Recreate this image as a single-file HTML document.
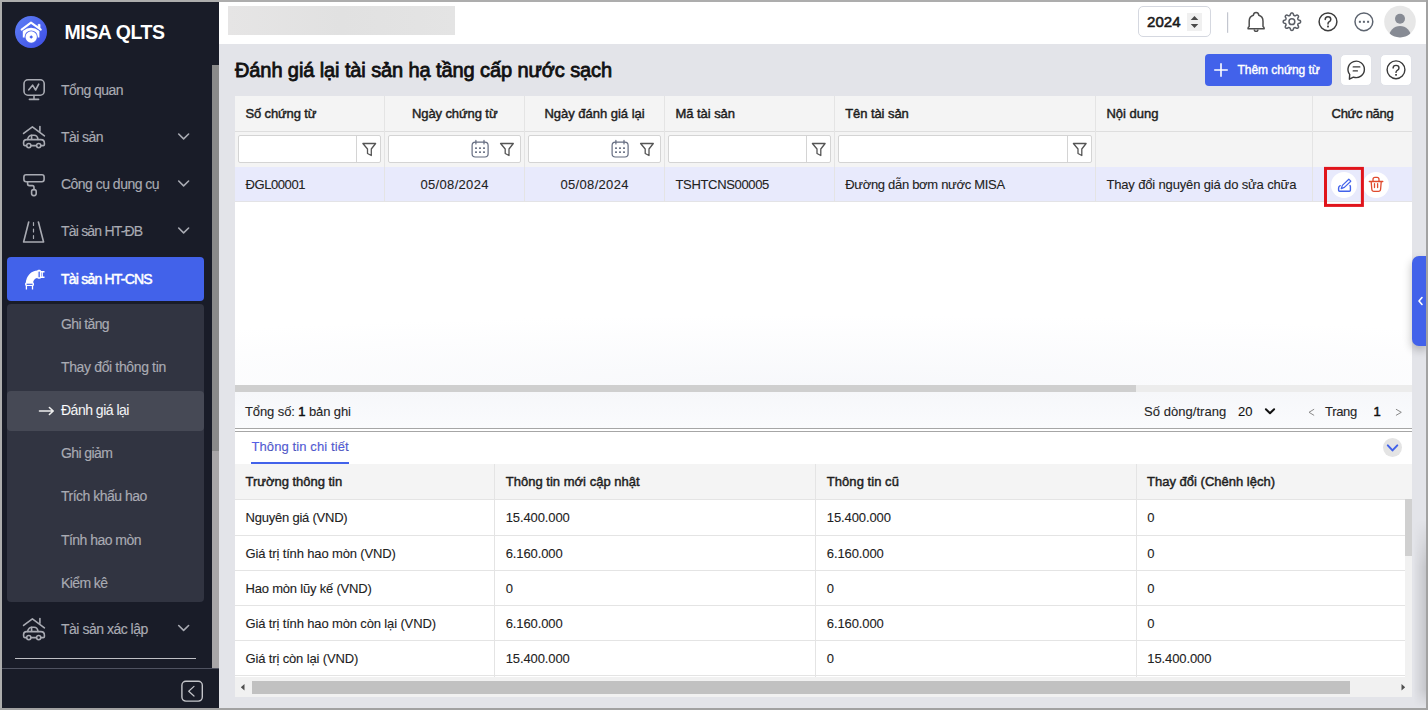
<!DOCTYPE html>
<html><head><meta charset="utf-8">
<style>
*{box-sizing:border-box;margin:0;padding:0}
html,body{width:1428px;height:710px;overflow:hidden;background:#e3e4e9;font-family:"Liberation Sans",sans-serif;position:relative}
.a{position:absolute;white-space:nowrap}
.mi{position:absolute;left:61px;font-size:14px;line-height:20px;color:#a9abb3;-webkit-text-stroke:0.15px #a9abb3;letter-spacing:-0.35px;white-space:nowrap}
.ico{position:absolute;left:22px;width:24px;height:24px}
.chev{position:absolute;left:176px;width:14px;height:14px}
.th{position:absolute;font-size:13px;line-height:20px;font-weight:normal;color:#1e1e1e;-webkit-text-stroke:0.45px #1e1e1e;letter-spacing:0;white-space:nowrap}
.td{position:absolute;font-size:13px;line-height:20px;color:#222;-webkit-text-stroke:0.1px #222;letter-spacing:-0.2px;white-space:nowrap}
.vl{position:absolute;width:1px;background:#e4e4e4}
.hl{position:absolute;height:1px;background:#e4e4e4}
.inp{position:absolute;top:135px;height:28px;background:#fff;border:1px solid #d4d4d4;border-radius:2px}
</style></head><body>
<!-- sidebar -->
<div class="a" style="left:2px;top:2px;width:217px;height:706px;background:#191c28"></div>
<!-- logo -->
<svg class="a" style="left:14px;top:14px" width="34" height="34" viewBox="14 14 34 34">
 <defs><linearGradient id="lg" x1="0" y1="0" x2="1" y2="1"><stop offset="0" stop-color="#5f80f6"/><stop offset="1" stop-color="#3d4ce4"/></linearGradient></defs>
 <circle cx="31" cy="32" r="16" fill="url(#lg)"/>
 <path d="M21.6 29.6 L31 22.6 L40.8 29.6" stroke="#fff" stroke-width="2" fill="none" stroke-linecap="round" stroke-linejoin="round"/>
 <path d="M38.2 27.6 V24.4 H40 V29" fill="#fff" stroke="#fff" stroke-width="0.8"/>
 <path d="M22.8 31 Q31 24.5 39.4 31 V37.6 H22.8Z" fill="#fff"/>
 <circle cx="31.2" cy="37" r="6.6" fill="#4f66ee"/>
 <circle cx="31.2" cy="37" r="5.7" fill="#fff"/>
 <rect x="29.9" y="35.7" width="2.6" height="2.6" transform="rotate(45 31.2 37)" fill="#4a62ee"/>
</svg>
<div class="a" style="left:64.5px;top:22px;font-size:19.5px;line-height:20px;font-weight:bold;color:#fff;letter-spacing:-0.45px">MISA QLTS</div>

<!-- sidebar scrollbar -->
<div class="a" style="left:212px;top:65px;width:7px;height:603px;background:#a8a6a8"></div>
<div class="a" style="left:212px;top:65px;width:7px;height:386px;background:#8a8a8a"></div>

<!-- icons -->
<svg class="a" style="left:0;top:60px" width="219" height="600" viewBox="0 60 219 600" fill="none" stroke="#a9abb3" stroke-width="1.6" stroke-linecap="round" stroke-linejoin="round">
 <!-- monitor -->
 <rect x="24" y="79.8" width="20.2" height="15.4" rx="4"/>
 <path d="M28.8 89.8 L32.6 85.2 L35.6 90 L38.7 84.2"/>
 <path d="M34 95.5 V99.4 M29.4 99.4 H38.6"/>
 <!-- house car -->
 <path d="M23.6 133.4 L32.4 126.8 L44.4 135.8"/>
 <path d="M39.9 126.5 V131.3"/>
 <path d="M27.6 139.4 Q28.5 135.2 32 135.2 H34 Q37.5 135.2 38 139.4"/>
 <path d="M31.6 135.4 V139.2"/>
 <path d="M26.3 145.6 H24.8 Q23.6 145.6 23.6 144 V142.4 Q23.6 139.6 26.6 139.6 H40.8 Q44.4 139.6 44.4 143.2 V144.4 Q44.4 145.6 43.2 145.6 H41.2 M31.3 145.6 H36.2"/>
 <circle cx="28.8" cy="145.6" r="2.1"/>
 <circle cx="38.7" cy="145.6" r="2.1"/>
 <!-- roller -->
 <rect x="23.9" y="174.8" width="20.2" height="7" rx="2.2"/>
 <path d="M27.6 182 V184 Q27.6 185.6 29.4 185.6 H32.4 Q34 185.6 34 187.4 V189.6"/>
 <rect x="31.6" y="189.6" width="4.6" height="6" rx="2"/>
 <!-- road -->
 <path d="M28.7 222 L23.6 242 H43.6 L38.4 222"/>
 <path d="M33.5 222.5 V225.5 M33.5 229 V232 M33.5 235.5 V238.5" stroke-width="1.2"/>
 <!-- chevrons -->
 <path d="M178.7 134 L183.6 138.9 L188.6 134"/>
 <path d="M178.7 181 L183.6 185.9 L188.6 181"/>
 <path d="M178.7 228 L183.6 232.9 L188.6 228"/>
 <path d="M178.7 625.5 L183.6 630.4 L188.6 625.5"/>
 <path d="M178.7 281 L183.6 275.9 L188.6 281" stroke="#fff" stroke-width="1.9"/>
 <!-- house car 2 -->
 <path d="M23.6 625.4 L32.4 618.8 L44.4 627.8"/>
 <path d="M39.9 618.5 V623.3"/>
 <path d="M27.6 631.4 Q28.5 627.2 32 627.2 H34 Q37.5 627.2 38 631.4"/>
 <path d="M31.6 627.4 V631.2"/>
 <path d="M26.3 637.6 H24.8 Q23.6 637.6 23.6 636 V634.4 Q23.6 631.6 26.6 631.6 H40.8 Q44.4 631.6 44.4 635.2 V636.4 Q44.4 637.6 43.2 637.6 H41.2 M31.3 637.6 H36.2"/>
 <circle cx="28.8" cy="637.6" r="2.1"/>
 <circle cx="38.7" cy="637.6" r="2.1"/>
</svg>

<!-- menu items -->
<div class="mi" style="top:80px;letter-spacing:-0.54px">Tổng quan</div>
<div class="mi" style="top:127px;letter-spacing:-0.57px">Tài sản</div>
<div class="mi" style="top:174px;letter-spacing:-0.52px">Công cụ dụng cụ</div>
<div class="mi" style="top:221px;letter-spacing:-0.8px">Tài sản HT-ĐB</div>
<div class="a" style="left:7px;top:257px;width:197px;height:44px;background:#4262ea;border-radius:4px"></div>
<svg class="a" style="left:18px;top:263px" width="32" height="32" viewBox="18 263 32 32">
 <path d="M25.9 283 A11.9 12.4 0 0 1 37.8 270.6 V278 A4.7 4.9 0 0 0 33.1 283 Z" fill="#fff"/>
 <rect x="37.2" y="269.8" width="3.8" height="9" rx="1.4" fill="#fff"/>
 <rect x="38.5" y="271.5" width="1.3" height="5.7" rx="0.5" fill="#4262ea"/>
 <path d="M40.8 271.7 H44.5 M42.2 271.7 V277.3 M40.8 277.3 H44.5" stroke="#fff" stroke-width="1.4" fill="none"/>
 <rect x="25.1" y="282.5" width="8.9" height="3.6" rx="1.3" fill="#fff"/>
 <rect x="26.6" y="283.7" width="5.9" height="1.2" fill="#4262ea"/>
 <path d="M26.4 286 V289.4 M32.5 286 V289.4" stroke="#fff" stroke-width="1.3"/>
</svg>
<div class="mi" style="top:268.5px;color:#fff;-webkit-text-stroke:0.5px #fff;letter-spacing:-0.79px">Tài sản HT-CNS</div>
<div class="a" style="left:7px;top:304px;width:197px;height:298px;background:#313441;border-radius:4px"></div>
<div class="a" style="left:7px;top:391px;width:197px;height:40px;background:#464955;border-radius:4px"></div>
<svg class="a" style="left:34px;top:400px" width="30" height="20" viewBox="34 400 30 20" fill="none" stroke="#eeeeee" stroke-width="1.6" stroke-linecap="round" stroke-linejoin="round">
 <path d="M39.5 411 H53 M49.4 407.5 L53.2 411 L49.4 414.5"/>
</svg>
<div class="mi" style="top:314px;letter-spacing:-0.62px">Ghi tăng</div>
<div class="mi" style="top:357px;letter-spacing:-0.36px">Thay đổi thông tin</div>
<div class="mi" style="top:400px;color:#fff;letter-spacing:-0.5px">Đánh giá lại</div>
<div class="mi" style="top:443px;letter-spacing:-0.6px">Ghi giảm</div>
<div class="mi" style="top:486px;letter-spacing:-0.51px">Trích khấu hao</div>
<div class="mi" style="top:530px;letter-spacing:-0.54px">Tính hao mòn</div>
<div class="mi" style="top:573px;letter-spacing:-0.61px">Kiểm kê</div>
<div class="mi" style="top:619px;letter-spacing:-0.49px">Tài sản xác lập</div>
<div class="a" style="left:15px;top:658px;width:181px;height:1px;background:#bfc0c5"></div>
<div class="a" style="left:2px;top:668px;width:217px;height:1px;background:#4f5260"></div>
<svg class="a" style="left:176px;top:674px" width="32" height="32" viewBox="176 674 32 32" fill="none" stroke="#c4c5ca" stroke-linecap="round" stroke-linejoin="round">
 <rect x="181.9" y="681.3" width="20.4" height="19.8" rx="4" stroke-width="1.4"/>
 <path d="M194 686.4 L188.7 691.2 L194 696" stroke-width="1.2"/>
</svg>

<!-- header -->
<div class="a" style="left:219px;top:2px;width:1207px;height:42px;background:#fff"></div>
<div class="a" style="left:228px;top:6px;width:227px;height:29px;background:linear-gradient(90deg,#e6e5e5,#e1e1e1 50%,#e4e4e4)"></div>
<div class="a" style="left:1138px;top:6px;width:73px;height:31px;border:1px solid #d5d8e0;border-radius:5px;background:#fff"></div>
<div class="a" style="left:1147px;top:12px;font-size:15px;line-height:20px;font-weight:normal;color:#1a1a1a;-webkit-text-stroke:0.55px #1a1a1a;letter-spacing:0.05px">2024</div>
<div class="a" style="left:1187px;top:13px;width:15px;height:18px;background:#f0f0f0"></div>
<svg class="a" style="left:1180px;top:2px" width="240" height="42" viewBox="1180 2 240 42">
 <path d="M1194.5 16 L1198.3 20 H1190.7 Z M1190.7 24 H1198.3 L1194.5 28 Z" fill="#4a4a4a"/>
 <rect x="1227" y="12.3" width="1.2" height="20.5" fill="#c3c6cf"/>
 <!-- bell -->
 <path d="M1248 28.7 Q1248 27.4 1249.2 26.4 V21.2 Q1249.2 16.4 1253.4 15.2 Q1253.8 12.6 1256.1 12.6 Q1258.4 12.6 1258.8 15.2 Q1263 16.4 1263 21.2 V26.4 Q1264.2 27.4 1264.2 28.7 Z" fill="none" stroke="#4d4d4d" stroke-width="1.5" stroke-linejoin="round"/>
 <path d="M1254.3 29.4 Q1254.3 31.3 1256.1 31.3 Q1257.9 31.3 1257.9 29.4" fill="none" stroke="#4d4d4d" stroke-width="1.4"/>
 <!-- gear -->
 <g transform="translate(1291.9 21.7)" fill="none" stroke="#5a5e66" stroke-width="1.5" stroke-linejoin="round">
  <path d="M0.00 -8.70 L0.34 -8.68 L0.68 -8.60 L1.00 -8.42 L1.27 -8.05 L1.48 -7.45 L1.65 -6.86 L1.82 -6.47 L2.03 -6.25 L2.25 -6.11 L2.49 -6.01 L2.73 -5.92 L2.98 -5.86 L3.28 -5.87 L3.69 -6.01 L4.22 -6.32 L4.79 -6.59 L5.25 -6.66 L5.60 -6.56 L5.90 -6.38 L6.15 -6.15 L6.38 -5.90 L6.56 -5.60 L6.66 -5.25 L6.59 -4.79 L6.32 -4.22 L6.01 -3.69 L5.87 -3.28 L5.86 -2.98 L5.92 -2.73 L6.01 -2.49 L6.11 -2.25 L6.25 -2.03 L6.47 -1.82 L6.86 -1.65 L7.45 -1.48 L8.05 -1.27 L8.42 -1.00 L8.60 -0.68 L8.68 -0.34 L8.70 0.00 L8.68 0.34 L8.60 0.68 L8.42 1.00 L8.05 1.27 L7.45 1.48 L6.86 1.65 L6.47 1.82 L6.25 2.03 L6.11 2.25 L6.01 2.49 L5.92 2.73 L5.86 2.98 L5.87 3.28 L6.01 3.69 L6.32 4.22 L6.59 4.79 L6.66 5.25 L6.56 5.60 L6.38 5.90 L6.15 6.15 L5.90 6.38 L5.60 6.56 L5.25 6.66 L4.79 6.59 L4.22 6.32 L3.69 6.01 L3.28 5.87 L2.98 5.86 L2.73 5.92 L2.49 6.01 L2.25 6.11 L2.03 6.25 L1.82 6.47 L1.65 6.86 L1.48 7.45 L1.27 8.05 L1.00 8.42 L0.68 8.60 L0.34 8.68 L0.00 8.70 L-0.34 8.68 L-0.68 8.60 L-1.00 8.42 L-1.27 8.05 L-1.48 7.45 L-1.65 6.86 L-1.82 6.47 L-2.03 6.25 L-2.25 6.11 L-2.49 6.01 L-2.73 5.92 L-2.98 5.86 L-3.28 5.87 L-3.69 6.01 L-4.22 6.32 L-4.79 6.59 L-5.25 6.66 L-5.60 6.56 L-5.90 6.38 L-6.15 6.15 L-6.38 5.90 L-6.56 5.60 L-6.66 5.25 L-6.59 4.79 L-6.32 4.22 L-6.01 3.69 L-5.87 3.28 L-5.86 2.98 L-5.92 2.73 L-6.01 2.49 L-6.11 2.25 L-6.25 2.03 L-6.47 1.82 L-6.86 1.65 L-7.45 1.48 L-8.05 1.27 L-8.42 1.00 L-8.60 0.68 L-8.68 0.34 L-8.70 0.00 L-8.68 -0.34 L-8.60 -0.68 L-8.42 -1.00 L-8.05 -1.27 L-7.45 -1.48 L-6.86 -1.65 L-6.47 -1.82 L-6.25 -2.03 L-6.11 -2.25 L-6.01 -2.49 L-5.92 -2.73 L-5.86 -2.98 L-5.87 -3.28 L-6.01 -3.69 L-6.32 -4.22 L-6.59 -4.79 L-6.66 -5.25 L-6.56 -5.60 L-6.38 -5.90 L-6.15 -6.15 L-5.90 -6.38 L-5.60 -6.56 L-5.25 -6.66 L-4.79 -6.59 L-4.22 -6.32 L-3.69 -6.01 L-3.28 -5.87 L-2.98 -5.86 L-2.73 -5.92 L-2.49 -6.01 L-2.25 -6.11 L-2.03 -6.25 L-1.82 -6.47 L-1.65 -6.86 L-1.48 -7.45 L-1.27 -8.05 L-1.00 -8.42 L-0.68 -8.60 L-0.34 -8.68 Z"/>
  <circle r="2.9"/>
 </g>
 <!-- help -->
 <circle cx="1328" cy="21.8" r="8.9" fill="none" stroke="#3d3d3d" stroke-width="1.5"/>
 <path d="M1325.2 19.6 Q1325.2 16.8 1328 16.8 Q1330.8 16.8 1330.8 19.4 Q1330.8 21 1329 21.9 Q1328 22.5 1328 24" fill="none" stroke="#3d3d3d" stroke-width="1.5" stroke-linecap="round"/>
 <rect x="1327.1" y="25.6" width="1.8" height="1.8" fill="#3d3d3d"/>
 <!-- more -->
 <circle cx="1363.9" cy="21.8" r="8.9" fill="none" stroke="#5e6570" stroke-width="1.5"/>
 <rect x="1358.9" y="20.8" width="2" height="2" fill="#5e6570"/>
 <rect x="1362.9" y="20.8" width="2" height="2" fill="#5e6570"/>
 <rect x="1367.1" y="20.8" width="2" height="2" fill="#5e6570"/>
 <!-- avatar -->
 <defs><clipPath id="avc"><circle cx="1400" cy="21.6" r="15.8"/></clipPath></defs>
 <circle cx="1400" cy="21.6" r="15.8" fill="#e7e7e7"/>
 <circle cx="1400" cy="18.8" r="5" fill="#878b94"/>
 <ellipse cx="1400" cy="37" rx="11" ry="11" fill="#878b94" clip-path="url(#avc)"/>
</svg>

<!-- title -->
<div class="a" style="left:235px;top:60px;font-size:20px;line-height:20px;font-weight:normal;color:#111;-webkit-text-stroke:0.8px #111;letter-spacing:-0.1px">Đánh giá lại tài sản hạ tầng cấp nước sạch</div>

<!-- buttons -->
<div class="a" style="left:1205px;top:54px;width:127px;height:32px;background:#4262ea;border-radius:4px"></div>
<svg class="a" style="left:1210px;top:58px" width="24" height="24" viewBox="1210 58 24 24"><path d="M1221 63.2 V76.8 M1214.2 70 H1227.8" stroke="#fff" stroke-width="1.6"/></svg>
<div class="a" style="left:1237.6px;top:60px;font-size:12px;line-height:20px;font-weight:normal;color:#fff;-webkit-text-stroke:0.4px #fff;letter-spacing:-0.05px">Thêm chứng từ</div>
<div class="a" style="left:1340px;top:54px;width:32px;height:32px;background:#fff;border:1px solid #e0e2e8;border-radius:5px"></div>
<div class="a" style="left:1380px;top:54px;width:32px;height:32px;background:#fff;border:1px solid #e0e2e8;border-radius:5px"></div>
<svg class="a" style="left:1340px;top:54px" width="72" height="32" viewBox="1340 54 72 32" fill="none" stroke="#3a3a3a" stroke-width="1.4" stroke-linecap="round" stroke-linejoin="round">
 <path d="M1349.7 74.4 A8.2 8.2 0 1 1 1353.4 77.1 L1349.4 79.2 Z"/>
 <path d="M1353.2 66.9 H1359.8 M1353.2 70.9 H1357.4" stroke-width="1.3"/>
 <circle cx="1396" cy="69.8" r="8.9"/>
 <path d="M1393.1 68.1 Q1393.1 65.4 1396 65.4 Q1399 65.4 1399 67.9 Q1399 69.4 1397.3 70.3 Q1396 71 1396 72.4"/>
 <rect x="1395.2" y="74" width="1.7" height="1.7" fill="#3a3a3a" stroke="none"/>
</svg>

<!-- table -->
<div class="a" style="left:235px;top:96px;width:1177px;height:71px;background:#f4f4f4"></div>
<div class="a" style="left:235px;top:167px;width:1177px;height:34px;background:#e8eafc"></div>
<div class="a" style="left:235px;top:201px;width:1177px;height:184px;background:radial-gradient(ellipse 1000px 70px at 50% 100%,#f7f8fb,#ffffff 100%)"></div>
<div class="hl" style="left:235px;top:201px;width:1177px;background:#e3e3e6"></div>
<div class="hl" style="left:235px;top:131px;width:1177px;background:#dedede"></div>
<div class="vl" style="left:384px;top:96px;height:106px"></div>
<div class="vl" style="left:524px;top:96px;height:106px"></div>
<div class="vl" style="left:664px;top:96px;height:106px"></div>
<div class="vl" style="left:834px;top:96px;height:106px"></div>
<div class="vl" style="left:1095px;top:96px;height:106px"></div>
<div class="vl" style="left:1312px;top:96px;height:106px"></div>

<div class="th" style="left:245.5px;top:104px;letter-spacing:-0.15px">Số chứng từ</div>
<div class="th" style="left:412px;top:104px;letter-spacing:-0.1px">Ngày chứng từ</div>
<div class="th" style="left:544.5px;top:104px;letter-spacing:-0.02px">Ngày đánh giá lại</div>
<div class="th" style="left:675.5px;top:104px;letter-spacing:-0.05px">Mã tài sản</div>
<div class="th" style="left:845.2px;top:104px;letter-spacing:-0.07px">Tên tài sản</div>
<div class="th" style="left:1106.4px;top:104px;letter-spacing:0px">Nội dung</div>
<div class="th" style="left:1331.5px;top:104px;letter-spacing:-0.26px">Chức năng</div>

<!-- filter inputs -->
<div class="inp" style="left:238px;width:143px"></div>
<div class="vl" style="left:356px;top:136px;height:26px;background:#d4d4d4"></div>
<div class="inp" style="left:388px;width:133px"></div>
<div class="inp" style="left:528px;width:133px"></div>
<div class="inp" style="left:668px;width:163px"></div>
<div class="vl" style="left:806px;top:136px;height:26px;background:#d4d4d4"></div>
<div class="inp" style="left:838px;width:254px"></div>
<div class="vl" style="left:1067px;top:136px;height:26px;background:#d4d4d4"></div>

<svg class="a" style="left:235px;top:132px" width="1177" height="34" viewBox="235 132 1177 34" fill="none" stroke-linejoin="round" stroke-linecap="round">
 <g stroke="#555" stroke-width="1.3">
  <path d="M362.9 143.5 H375.6 L371.3 149 V155.5 L367.5 153.5 V149 Z"/>
  <path d="M500.6 143.5 H513.3 L509 149 V155.5 L505.2 153.5 V149 Z"/>
  <path d="M640.6 143.5 H653.3 L649 149 V155.5 L645.2 153.5 V149 Z"/>
  <path d="M812.4 143.5 H825.1 L820.8 149 V155.5 L817 153.5 V149 Z"/>
  <path d="M1073.4 143.5 H1086.1 L1081.8 149 V155.5 L1078 153.5 V149 Z"/>
 </g>
 <g id="cal1" stroke="#646c80" stroke-width="1.2">
  <rect x="472.1" y="142.2" width="16" height="14.8" rx="3.2"/>
  <path d="M475.9 140.3 V144 M484 140.3 V144"/>
 </g>
 <g fill="#646c80" stroke="none">
  <rect x="475" y="147.4" width="2" height="1.5"/><rect x="479" y="147.4" width="2" height="1.5"/><rect x="483" y="147.4" width="2" height="1.5"/>
  <rect x="475" y="151.4" width="2" height="1.5"/><rect x="479" y="151.4" width="2" height="1.5"/><rect x="483" y="151.4" width="2" height="1.5"/>
 </g>
 <g stroke="#646c80" stroke-width="1.2">
  <rect x="612.1" y="142.2" width="16" height="14.8" rx="3.2"/>
  <path d="M615.9 140.3 V144 M624 140.3 V144"/>
 </g>
 <g fill="#646c80" stroke="none">
  <rect x="615" y="147.4" width="2" height="1.5"/><rect x="619" y="147.4" width="2" height="1.5"/><rect x="623" y="147.4" width="2" height="1.5"/>
  <rect x="615" y="151.4" width="2" height="1.5"/><rect x="619" y="151.4" width="2" height="1.5"/><rect x="623" y="151.4" width="2" height="1.5"/>
 </g>
</svg>

<!-- data row -->
<div class="td" style="left:245.5px;top:175px;letter-spacing:-0.42px">ĐGL00001</div>
<div class="td" style="left:420.5px;top:175px;letter-spacing:0.32px">05/08/2024</div>
<div class="td" style="left:560.5px;top:175px;letter-spacing:0.32px">05/08/2024</div>
<div class="td" style="left:675.5px;top:175px;letter-spacing:-0.34px">TSHTCNS00005</div>
<div class="td" style="left:845.2px;top:175px;letter-spacing:-0.3px">Đường dẫn bơm nước MISA</div>
<div class="td" style="left:1106.4px;top:175px;letter-spacing:-0.15px">Thay đổi nguyên giá do sửa chữa</div>
<div class="a" style="left:1331px;top:171.7px;width:26px;height:26px;border-radius:50%;background:#fff"></div>
<div class="a" style="left:1363px;top:171.7px;width:26px;height:26px;border-radius:50%;background:#fff"></div>
<svg class="a" style="left:1320px;top:164px" width="75" height="46" viewBox="1320 164 75 46" fill="none" stroke-linecap="round" stroke-linejoin="round">
 <rect x="1325.5" y="168.4" width="36.9" height="37" stroke="#e0141b" stroke-width="3" stroke-linejoin="miter"/>
 <path d="M1348.8 179.2 L1350.8 181.2 L1344.4 187.4 L1341.2 188.6 L1342.4 185.4 Z" stroke="#4262ea" stroke-width="1.2"/>
 <path d="M1340.2 185.6 Q1338.6 186.2 1338.6 188 V190.3 Q1338.6 191.3 1339.6 191.3 H1349.4 Q1350.4 191.3 1350.4 190.3 V186.6 Q1350.4 185.9 1350 185.6" stroke="#4262ea" stroke-width="1.4"/>
 <g stroke="#e04a2e" stroke-width="1.3">
  <path d="M1369.3 181.5 H1382.8"/>
  <path d="M1373 181.2 V179.4 Q1373 177.4 1375 177.4 H1377 Q1379 177.4 1379 179.4 V181.2"/>
  <path d="M1371.2 182 L1371.8 189.2 Q1372 191.3 1374 191.3 H1378.4 Q1380.4 191.3 1380.6 189.2 L1381.2 182"/>
  <path d="M1374.5 183.6 V187.6 M1377.6 183.6 V187.6"/>
 </g>
</svg>

<!-- paging -->
<div class="a" style="left:235px;top:385px;width:1177px;height:7px;background:#ececec"></div>
<div class="a" style="left:235px;top:385px;width:901px;height:7px;background:#cfcfcf"></div>
<div class="a" style="left:235px;top:392px;width:1177px;height:36px;background:linear-gradient(180deg,#f6f7fa,#fafbfd)"></div>
<div class="a" style="left:235px;top:428px;width:1177px;height:1px;background:#a6a6a6"></div>
<div class="a" style="left:235px;top:429px;width:1177px;height:2px;background:#fff"></div>
<div class="a" style="left:235px;top:431px;width:1177px;height:1px;background:#a6a6a6"></div>
<div class="td" style="left:245px;top:402px;letter-spacing:-0.1px;color:#262626">Tổng số: <span style="color:#111;-webkit-text-stroke:0.5px #111">1</span> bản ghi</div>
<div class="td" style="left:1144px;top:402px;letter-spacing:0.05px;color:#262626">Số dòng/trang</div>
<div class="td" style="left:1238px;top:402px;letter-spacing:-0.1px;color:#111">20</div>
<div class="td" style="left:1325px;top:402px;letter-spacing:-0.3px;color:#262626">Trang</div>
<div class="td" style="left:1373.5px;top:402px;color:#111;-webkit-text-stroke:0.5px #111">1</div>
<svg class="a" style="left:1260px;top:400px" width="150" height="24" viewBox="1260 400 150 24" fill="none" stroke-linecap="round" stroke-linejoin="round">
 <path d="M1265.9 409.2 L1270 413.2 L1274.1 409.2" stroke="#111" stroke-width="2"/>
 <path d="M1313.8 409.4 L1309 412.3 L1313.8 415.2" stroke="#8a8a8a" stroke-width="1"/>
 <path d="M1396.3 409.4 L1401.3 412.3 L1396.3 415.2" stroke="#8a8a8a" stroke-width="1"/>
</svg>

<!-- detail -->
<div class="a" style="left:235px;top:432px;width:1177px;height:245px;background:#fff"></div>
<div class="td" style="left:251.5px;top:437px;color:#5560e8;letter-spacing:0.1px">Thông tin chi tiết</div>
<div class="a" style="left:251px;top:462px;width:98px;height:2px;background:#4262ea"></div>
<div class="a" style="left:1383px;top:438px;width:19px;height:19px;border-radius:50%;background:#e4e4e4"></div>
<svg class="a" style="left:1382px;top:437px" width="21" height="21" viewBox="1382 437 21 21"><path d="M1387.8 445.4 L1392.5 450.4 L1397.3 445.4" fill="none" stroke="#4262ea" stroke-width="2" stroke-linecap="round" stroke-linejoin="round"/></svg>

<div class="a" style="left:235px;top:464px;width:1177px;height:35px;background:#f4f4f4"></div>
<div class="vl" style="left:494px;top:464px;height:213px"></div>
<div class="vl" style="left:815px;top:464px;height:213px"></div>
<div class="vl" style="left:1136px;top:464px;height:213px"></div>
<div class="hl" style="left:235px;top:499px;width:1170px"></div>
<div class="hl" style="left:235px;top:535px;width:1170px"></div>
<div class="hl" style="left:235px;top:570px;width:1170px"></div>
<div class="hl" style="left:235px;top:605px;width:1170px"></div>
<div class="hl" style="left:235px;top:640px;width:1170px"></div>
<div class="hl" style="left:235px;top:675px;width:1170px"></div>
<div class="th" style="left:245.5px;top:472px;letter-spacing:-0.02px">Trường thông tin</div>
<div class="th" style="left:505.7px;top:472px;letter-spacing:0.02px">Thông tin mới cập nhật</div>
<div class="th" style="left:826.8px;top:472px;letter-spacing:0.05px">Thông tin cũ</div>
<div class="th" style="left:1147.1px;top:472px;letter-spacing:0px">Thay đổi (Chênh lệch)</div>

<div class="td" style="left:245.5px;top:508px;letter-spacing:-0.22px">Nguyên giá (VND)</div>
<div class="td" style="left:505.7px;top:508px;letter-spacing:-0.1px">15.400.000</div>
<div class="td" style="left:826.8px;top:508px;letter-spacing:-0.1px">15.400.000</div>
<div class="td" style="left:1147.3px;top:508px">0</div>
<div class="td" style="left:245.5px;top:543.5px;letter-spacing:-0.14px">Giá trị tính hao mòn (VND)</div>
<div class="td" style="left:505.7px;top:543.5px;letter-spacing:-0.1px">6.160.000</div>
<div class="td" style="left:826.8px;top:543.5px;letter-spacing:-0.1px">6.160.000</div>
<div class="td" style="left:1147.3px;top:543.5px">0</div>
<div class="td" style="left:245.5px;top:579px;letter-spacing:-0.2px">Hao mòn lũy kế (VND)</div>
<div class="td" style="left:505.7px;top:579px">0</div>
<div class="td" style="left:826.8px;top:579px">0</div>
<div class="td" style="left:1147.3px;top:579px">0</div>
<div class="td" style="left:245.5px;top:614px;letter-spacing:-0.14px">Giá trị tính hao mòn còn lại (VND)</div>
<div class="td" style="left:505.7px;top:614px;letter-spacing:-0.1px">6.160.000</div>
<div class="td" style="left:826.8px;top:614px;letter-spacing:-0.1px">6.160.000</div>
<div class="td" style="left:1147.3px;top:614px">0</div>
<div class="td" style="left:245.5px;top:649px;letter-spacing:-0.14px">Giá trị còn lại (VND)</div>
<div class="td" style="left:505.7px;top:649px;letter-spacing:-0.1px">15.400.000</div>
<div class="td" style="left:826.8px;top:649px">0</div>
<div class="td" style="left:1147.3px;top:649px;letter-spacing:-0.1px">15.400.000</div>

<!-- detail scrollbars -->
<div class="a" style="left:1405px;top:499px;width:7px;height:178px;background:#f1f1f1"></div>
<div class="a" style="left:1405px;top:499px;width:7px;height:57px;background:#d0d0d0"></div>
<div class="a" style="left:235px;top:677px;width:1177px;height:20px;background:#f1f1f1"></div>
<div class="a" style="left:252px;top:681px;width:1098px;height:13px;background:#c1c1c1"></div>
<svg class="a" style="left:235px;top:677px" width="1177" height="20" viewBox="235 677 1177 20"><path d="M244.5 684 V690.5 L240.8 687.2 Z M1401.5 684 V690.5 L1405.2 687.2 Z" fill="#505050"/></svg>

<div class="a" style="left:1412px;top:520px;width:14px;height:188px;background:linear-gradient(90deg,rgba(0,0,0,0) 10%,rgba(0,0,0,0.13));-webkit-mask-image:linear-gradient(180deg,transparent,#000 25%,#000 90%,transparent)"></div>
<!-- right tab -->
<div class="a" style="left:1412px;top:256px;width:16px;height:90px;background:#4262ea;border-radius:7px 0 0 7px;box-shadow:-1px 4px 8px rgba(0,0,0,0.22)"></div>
<svg class="a" style="left:1412px;top:290px" width="14" height="22" viewBox="1412 290 14 22"><path d="M1422 297.5 L1419 301 L1422 304.5" fill="none" stroke="#fff" stroke-width="1.6" stroke-linecap="round" stroke-linejoin="round"/></svg>


<!-- frame border -->
<div class="a" style="left:0;top:0;width:1428px;height:2px;background:#adadad"></div>
<div class="a" style="left:0;top:0;width:2px;height:710px;background:#adadad"></div>
<div class="a" style="left:1426px;top:0;width:2px;height:710px;background:#a2a2a2"></div>
<div class="a" style="left:0;top:708px;width:1428px;height:2px;background:#a2a2a2"></div>
</body></html>
